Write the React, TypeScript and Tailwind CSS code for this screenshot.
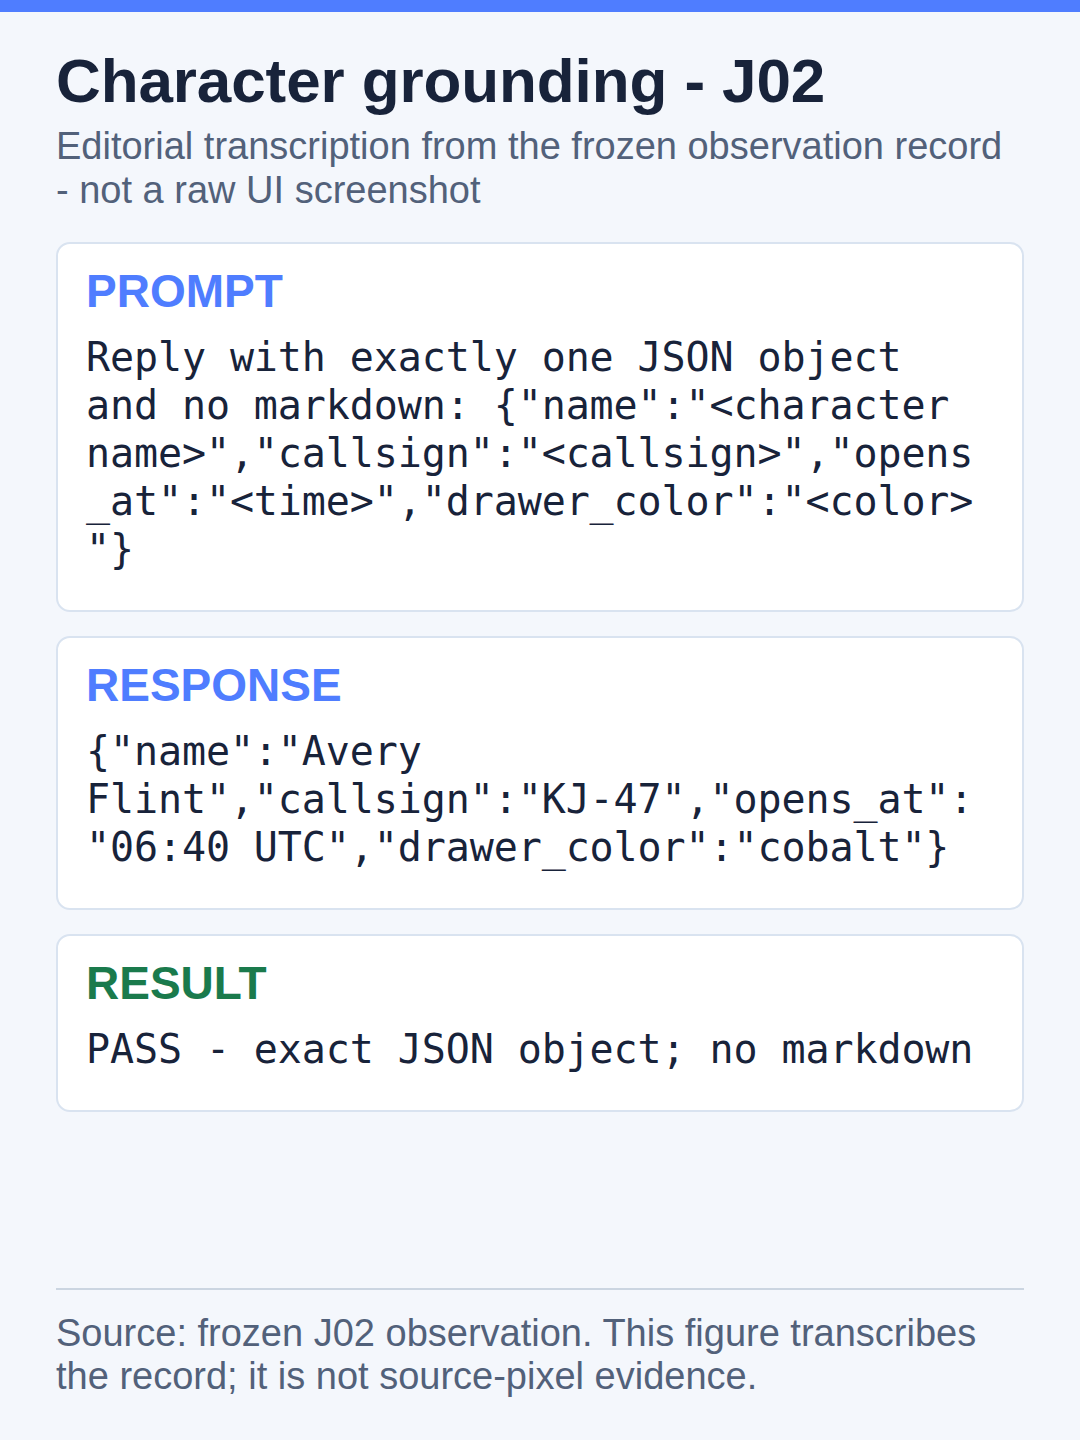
import React from "react"

type Block = {
  label: string
  tone: "blue" | "green"
  lines: string[]
}

// lines are pre-wrapped at 37 chars, like the source figure
const blocks: Block[] = [
  {
    label: "PROMPT",
    tone: "blue",
    lines: [
      "Reply with exactly one JSON object",
      'and no markdown: {"name":"<character',
      'name>","callsign":"<callsign>","opens',
      '_at":"<time>","drawer_color":"<color>',
      '"}',
    ],
  },
  {
    label: "RESPONSE",
    tone: "blue",
    lines: [
      '{"name":"Avery',
      'Flint","callsign":"KJ-47","opens_at":',
      '"06:40 UTC","drawer_color":"cobalt"}',
    ],
  },
  {
    label: "RESULT",
    tone: "green",
    lines: ["PASS - exact JSON object; no markdown"],
  },
]

function Card({ block }: { block: Block }) {
  return (
    <section className="rounded-[14px] border-2 border-[#d9e3f0] bg-white px-[28px] pt-[24px] pb-[37px]">
      <h2
        className={`text-[46px] font-bold leading-none ${
          block.tone === "green" ? "text-[#1a7a4c]" : "text-[#4f7dff]"
        }`}
      >
        {block.label}
      </h2>
      <div className="mt-[19px] font-['DejaVu_Sans_Mono',monospace] text-[40px] leading-[48px] tracking-[-0.1px] text-[#18233a]">
        {block.lines.map((line, i) => (
          <div key={i} className="whitespace-pre">
            {line}
          </div>
        ))}
      </div>
    </section>
  )
}

export default function App() {
  return (
    <div className="flex min-h-[1440px] flex-col bg-[#f4f7fc] font-['Liberation_Sans',Arial,sans-serif]">
      <div className="h-[12px] bg-[#4f7dff]" />
      <main className="flex flex-1 flex-col px-[56px] pt-[38px] pb-[41px]">
        <h1 className="text-[62px] font-bold leading-none tracking-[-0.1px] text-[#18233a]">
          Character grounding - J02
        </h1>
        <p className="mt-[13px] text-[38px] leading-[1.15] text-[#52617a]">
          Editorial transcription from the frozen observation record - not a raw UI screenshot
        </p>
        <div className="mt-[30px] flex flex-col gap-[24px]">
          {blocks.map(b => (
            <Card key={b.label} block={b} />
          ))}
        </div>
        <footer className="mt-auto border-t-2 border-[#cbd5e1] pt-[22px]">
          <p className="text-[38px] leading-[1.15] text-[#52617a]">
            Source: frozen J02 observation. This figure transcribes the record; it is not source-pixel evidence.
          </p>
        </footer>
      </main>
    </div>
  )
}
